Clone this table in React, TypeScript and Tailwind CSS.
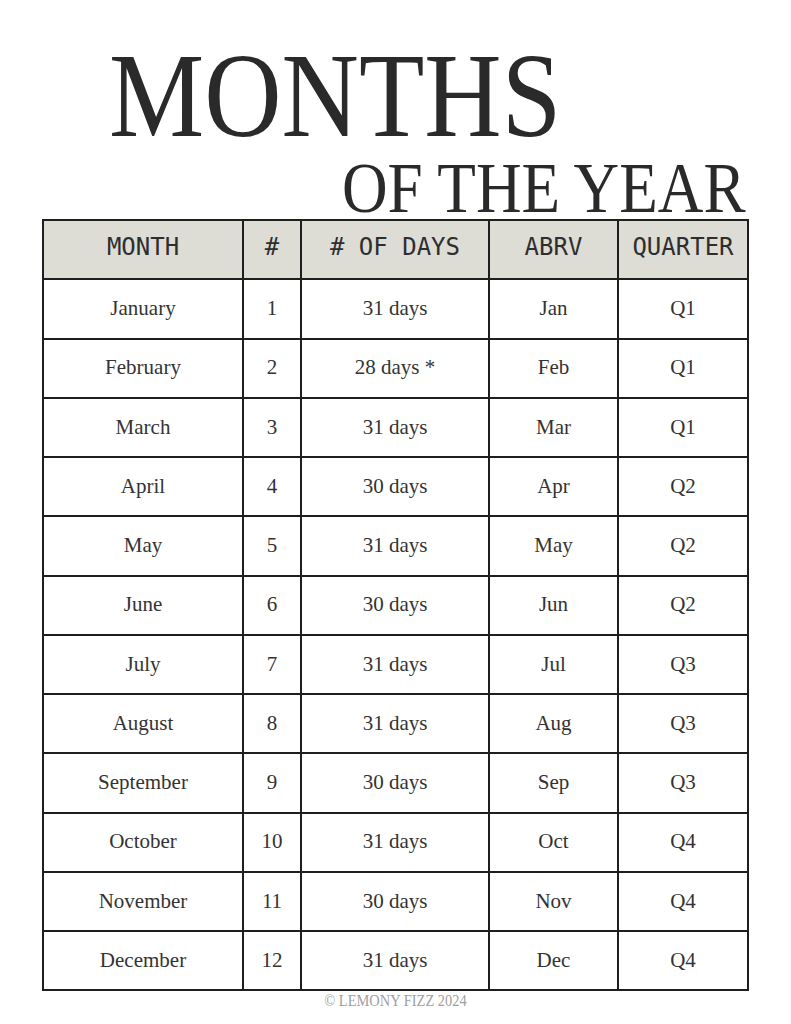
const rows: [string, string, string, string, string][] = [
  ["January", "1", "31 days", "Jan", "Q1"],
  ["February", "2", "28 days *", "Feb", "Q1"],
  ["March", "3", "31 days", "Mar", "Q1"],
  ["April", "4", "30 days", "Apr", "Q2"],
  ["May", "5", "31 days", "May", "Q2"],
  ["June", "6", "30 days", "Jun", "Q2"],
  ["July", "7", "31 days", "Jul", "Q3"],
  ["August", "8", "31 days", "Aug", "Q3"],
  ["September", "9", "30 days", "Sep", "Q3"],
  ["October", "10", "31 days", "Oct", "Q4"],
  ["November", "11", "30 days", "Nov", "Q4"],
  ["December", "12", "31 days", "Dec", "Q4"],
];

const headers = ["MONTH", "#", "# OF DAYS", "ABRV", "QUARTER"];

const cell =
  "border-r-2 border-b-2 border-[#1e1e1e] h-[59.25px] flex items-center justify-center";

export default function App() {
  return (
    <div className="w-[791px] h-[1024px] bg-white overflow-hidden flex flex-col font-['Liberation_Serif',serif]">
      <div className="pt-[35px] pl-[109px] h-[155px]">
        <div className="text-[121px] leading-none text-[#2a2a2a] origin-left scale-x-[0.885] whitespace-nowrap">
          MONTHS
        </div>
      </div>
      <div className="flex justify-end pr-[45px] h-[66px] -mt-[2px]">
        <div className="text-[71px] leading-none text-[#2a2a2a] origin-right scale-x-[0.89] whitespace-nowrap">
          OF THE YEAR
        </div>
      </div>
      <div className="ml-[42px] w-[707px] border-l-2 border-t-2 border-[#1e1e1e] grid grid-cols-[200px_58px_188px_129px_130px]">
        {headers.map((h) => (
          <div
            key={h}
            className={`${cell} pb-[6px] bg-[#dddcd5] text-[24px] text-[#2e2e2e] whitespace-pre font-['DejaVu_Sans_Mono',monospace]`}
          >
            {h}
          </div>
        ))}
        {rows.map((r) =>
          r.map((v, i) => (
            <div key={r[0] + i} className={`${cell} text-[21px] text-[#333333]`}>
              {v}
            </div>
          ))
        )}
      </div>
      <div className="text-center text-[17px] leading-none text-[#a0a0a0] mt-[1px] scale-x-[0.85]">
        © LEMONY FIZZ 2024
      </div>
    </div>
  );
}
